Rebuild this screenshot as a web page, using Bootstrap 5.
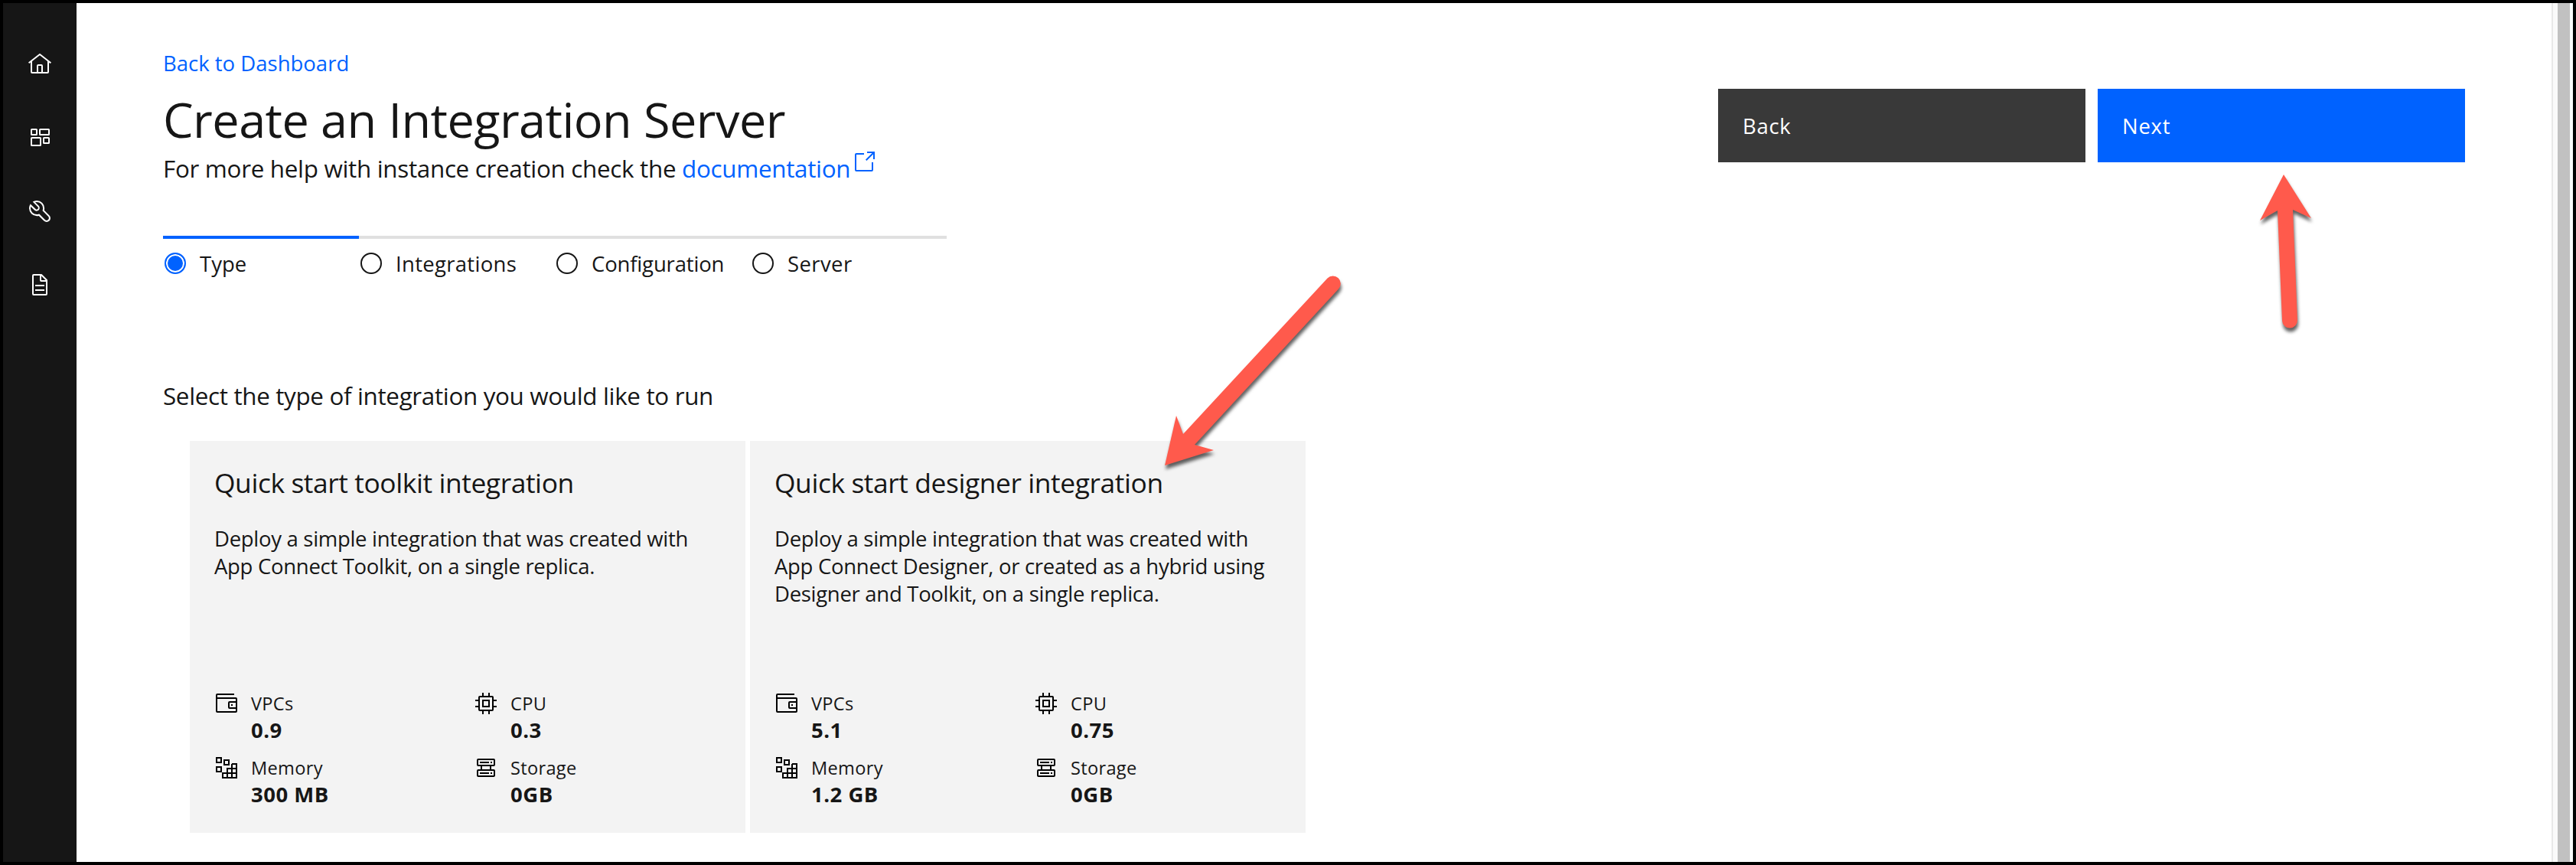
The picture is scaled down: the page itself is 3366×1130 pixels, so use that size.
<!DOCTYPE html>
<html lang="en">
<head>
<meta charset="utf-8">
<meta name="viewport" content="width=device-width, initial-scale=1">
<title>Create an Integration Server</title>
<link href="https://cdn.jsdelivr.net/npm/bootstrap@5.3.0/dist/css/bootstrap.min.css" rel="stylesheet">
<style>
  body { width: 3366px; height: 1130px; overflow: hidden; font-family: "Open Sans", "Noto Sans", sans-serif; color: #161616; background: #fff; font-size: 27.5px; line-height: 36px; }
  .frame { height: 1130px; border: 4px solid #000; }
  a { color: #0062ff; }
  .side { width: 96px; background: #161616; color: #fff; padding-top: 64px; gap: 64px; }
  svg { display: block; fill: currentColor; flex: none; }
  .side svg, .ico { width: 32px; height: 32px; }
  .page { padding: 61px 113px 0 113px; }
  .crumb { letter-spacing: 0; line-height: 36px; }
  .page-title { font-size: 63px; line-height: 80px; font-weight: 400; letter-spacing: -.56px; margin: 15px 0 4px; }
  .help { font-size: 31.4px; line-height: 40px; letter-spacing: -.31px; height: 40px; }
  .help .ico { margin: -4px 0 0 2px; }
  .steps { width: 1024px; margin-top: 68px; }
  .step { width: 256px; border-top: 4px solid #e0e0e0; padding: 14px 0 0 2px; gap: 18px; }
  .step.on { border-color: #0062ff; }
  .step span { padding-top: 1px; height: 36px; }
  .step i { width: 28px; height: 28px; border: 2px solid #161616; border-radius: 50%; flex: none; }
  .step.on i { border-color: #0062ff; background: #0062ff; box-shadow: inset 0 0 0 2px #fff; }
  .s2 { letter-spacing: .3px; } .s3 { letter-spacing: -.16px; } .s4 { letter-spacing: .4px; }
  .prompt { font-size: 31.4px; line-height: 40px; letter-spacing: -.34px; margin: 135px 0 39px; }
  .tiles { gap: 6px; margin-left: 35px; }
  .tile { width: 726px; height: 512px; background: #f3f3f3; padding: 30px 0 33px 32px; }
  .tile h2 { font-size: 35.4px; line-height: 48px; font-weight: 400; letter-spacing: -.42px; margin: 0 0 32px; }
  .tile p { letter-spacing: -.3px; white-space: nowrap; }
  .specs { row-gap: 16px; }
  .spec { width: 339px; gap: 16px; }
  .spec .ico { color: #000; }
  .lbl { font-size: 23.6px; line-height: 32px; letter-spacing: .3px; }
  .val { font-weight: 700; line-height: 36px; letter-spacing: .5px; padding-top: 1px; margin-bottom: -1px; }
  .actions { gap: 16px; padding-top: 51px; }
  .actions .btn { width: 480px; height: 96px; border: 0; border-radius: 0; font-size: 27.5px; line-height: 36px; letter-spacing: .7px; padding: 1px 0 0 32px; color: #fff; text-align: left; }
  .b-back { background: #393939; } .b-next { background: #0062ff; }
  .scroll { width: 28px; background: #fafafa; border-left: 2px solid #e8e8e8; padding: 0 4px 0 6px; }
  .scroll div { background: #c1c1c1; }
  .marks { left: 0; top: 0; pointer-events: none; }
  .marks g { fill: #ff5a4c; filter: drop-shadow(1px 5px 2px rgba(0,0,0,.62)); }
</style>
</head>
<body>
<svg width="0" height="0" class="position-absolute">
  <symbol id="wallet" viewBox="0 0 32 32"><path d="M22 17h2v2h-2z"/><path d="M28,8H4V5H26V3H4A2,2,0,0,0,2,5V26a2,2,0,0,0,2,2H28a2,2,0,0,0,2-2V10A2,2,0,0,0,28,8ZM4,26V10H28v3H20a2,2,0,0,0-2,2v6a2,2,0,0,0,2,2h8v3ZM28,15v6H20V15Z"/></symbol>
  <symbol id="chip" viewBox="0 0 32 32"><path d="M11,11V21H21V11Zm8,8H13V13h6Z"/><path d="M30,13V11H26V8a2,2,0,0,0-2-2H21V2H19V6H13V2H11V6H8A2,2,0,0,0,6,8v3H2v2H6v6H2v2H6v3a2,2,0,0,0,2,2h3v4h2V26h6v4h2V26h3a2,2,0,0,0,2-2V21h4V19H26V13ZM24,24H8V8H24Z"/></symbol>
  <symbol id="blocks" viewBox="0 0 32 32"><g fill="none" stroke="#000" stroke-width="2"><path d="M3 3h6v6H3zM13 6h6v6h-6zM3 15h6v6H3zM23 11h6v18H11v-6h18M17 29V17h12M23 11v18"/></g></symbol>
  <symbol id="disks" viewBox="0 0 32 32"><g fill="none" stroke="#000" stroke-width="2"><rect x="5" y="5" width="22" height="8" rx="1"/><rect x="5" y="19" width="22" height="8" rx="1"/><path d="M10 13v6M22 13v6M8 9h12M22 9h2M8 23h12M22 23h2"/></g></symbol>
</svg>

<div class="frame d-flex position-relative">
  <nav class="side d-flex flex-column align-items-center">
    <svg viewBox="0 0 32 32"><path d="M16.6123,2.2138a1.01,1.01,0,0,0-1.2427,0L1,13.4194l1.2427,1.5717L4,13.6209V26a2.0041,2.0041,0,0,0,2,2H26a2.0037,2.0037,0,0,0,2-2V13.63L29.7573,15,31,13.4282ZM18,26H14V18h4Zm2,0V18a2.0023,2.0023,0,0,0-2-2H14a2.002,2.002,0,0,0-2,2v8H6V12.0615l10-7.79,10,7.8005V26Z"/></svg>
    <svg viewBox="0 0 32 32"><g fill="none" stroke="#fff" stroke-width="2"><rect x="5" y="5" width="7" height="7" rx=".6"/><rect x="16" y="5" width="12" height="7" rx=".6"/><rect x="5" y="16" width="12" height="10" rx=".6"/><rect x="21" y="16" width="7" height="7" rx=".6"/></g></svg>
    <svg viewBox="0 0 32 32"><path d="M12.1,2A9.8,9.8,0,0,0,6.7,3.6L13.1,10a2.1,2.1,0,0,1,.2,3,2.1,2.1,0,0,1-3-.2L3.7,6.4A9.84,9.84,0,0,0,2,12.1,10.14,10.14,0,0,0,12.1,22.2a10.9,10.9,0,0,0,2.6-.3l6.7,6.7a5,5,0,0,0,7.1-7.1l-6.7-6.7a10.9,10.9,0,0,0,.3-2.6A10,10,0,0,0,12.1,2Zm8,10.1a7.61,7.61,0,0,1-.3,2.1l-.3,1.1.8.8,6.7,6.7a2.88,2.88,0,0,1,.9,2.1A2.72,2.72,0,0,1,27,27a2.9,2.9,0,0,1-4.2,0l-6.7-6.7-.8-.8-1.1.3a7.61,7.61,0,0,1-2.1.3,8.27,8.27,0,0,1-5.7-2.3A7.63,7.63,0,0,1,4,12.1a8.33,8.33,0,0,1,.3-2.2l4.4,4.4a4.14,4.14,0,0,0,5.9.2,4.14,4.14,0,0,0-.2-5.9L10,4.2a6.45,6.45,0,0,1,2-.3,8.27,8.27,0,0,1,5.7,2.3A8.49,8.49,0,0,1,20.1,12.1Z"/></svg>
    <svg viewBox="0 0 32 32"><path d="M25.7,9.3l-7-7A.91.91,0,0,0,18,2H8A2,2,0,0,0,6,4V28a2,2,0,0,0,2,2H24a2,2,0,0,0,2-2V10A.91.91,0,0,0,25.7,9.3ZM18,4.4,23.6,10H18ZM24,28H8V4h8v6a2,2,0,0,0,2,2h6Z"/><path d="M10 22h12v2H10zM10 16h12v2H10z"/></svg>
  </nav>

  <main class="page flex-grow-1">
    <div class="d-flex justify-content-between align-items-start">
      <header>
        <a class="crumb d-block text-decoration-none" href="#">Back to Dashboard</a>
        <h1 class="page-title">Create an Integration Server</h1>
        <div class="help d-flex align-items-start text-nowrap">For more help with instance creation check the&nbsp;<a class="text-decoration-none d-flex" href="#">documentation<svg class="ico" viewBox="0 0 32 32"><path d="M26,28H6a2,2,0,0,1-2-2V6A2,2,0,0,1,6,4H16V6H6V26H26V16h2V26A2,2,0,0,1,26,28Z"/><path d="M20 2v2h6.586L18 12.586 19.414 14 28 5.414V12h2V2z"/></svg></a></div>
      </header>
      <div class="actions d-flex">
        <button class="btn b-back" type="button">Back</button>
        <button class="btn b-next" type="button">Next</button>
      </div>
    </div>

    <div class="steps d-flex">
      <div class="step on d-flex align-items-center"><i></i><span>Type</span></div>
      <div class="step d-flex align-items-center"><i></i><span class="s2">Integrations</span></div>
      <div class="step d-flex align-items-center"><i></i><span class="s3">Configuration</span></div>
      <div class="step d-flex align-items-center"><i></i><span class="s4">Server</span></div>
    </div>

    <div class="prompt">Select the type of integration you would like to run</div>

    <div class="tiles d-flex">
      <section class="tile d-flex flex-column">
        <h2>Quick start toolkit integration</h2>
        <p class="m-0">Deploy a simple integration that was created with<br>App Connect Toolkit, on a single replica.</p>
        <div class="specs d-flex flex-wrap mt-auto">
          <div class="spec d-flex"><svg class="ico"><use href="#wallet"/></svg><div><div class="lbl">VPCs</div><div class="val">0.9</div></div></div>
          <div class="spec d-flex"><svg class="ico"><use href="#chip"/></svg><div><div class="lbl">CPU</div><div class="val">0.3</div></div></div>
          <div class="spec d-flex"><svg class="ico"><use href="#blocks"/></svg><div><div class="lbl">Memory</div><div class="val">300 MB</div></div></div>
          <div class="spec d-flex"><svg class="ico"><use href="#disks"/></svg><div><div class="lbl">Storage</div><div class="val">0GB</div></div></div>
        </div>
      </section>
      <section class="tile d-flex flex-column">
        <h2>Quick start designer integration</h2>
        <p class="m-0">Deploy a simple integration that was created with<br>App Connect Designer, or created as a hybrid using<br>Designer and Toolkit, on a single replica.</p>
        <div class="specs d-flex flex-wrap mt-auto">
          <div class="spec d-flex"><svg class="ico"><use href="#wallet"/></svg><div><div class="lbl">VPCs</div><div class="val">5.1</div></div></div>
          <div class="spec d-flex"><svg class="ico"><use href="#chip"/></svg><div><div class="lbl">CPU</div><div class="val">0.75</div></div></div>
          <div class="spec d-flex"><svg class="ico"><use href="#blocks"/></svg><div><div class="lbl">Memory</div><div class="val">1.2 GB</div></div></div>
          <div class="spec d-flex"><svg class="ico"><use href="#disks"/></svg><div><div class="lbl">Storage</div><div class="val">0GB</div></div></div>
        </div>
      </section>
    </div>
  </main>

  <div class="scroll d-flex"><div class="flex-grow-1"></div></div>
</div>

<svg class="marks position-absolute" width="3366" height="1130" viewBox="0 0 3366 1130">
  <g><path d="M1522 608L1537 543L1546 567L1734.500 363.500A10 10 0 0 1 1749 377.500L1561 581L1586 588Z"/></g>
  <g><path d="M2984 228L3020 285L2996 274L3002 418A10 10 0 0 1 2982 419L2976 275L2953 288Z"/></g>
</svg>
<script src="https://cdn.jsdelivr.net/npm/bootstrap@5.3.0/dist/js/bootstrap.bundle.min.js"></script>
</body>
</html>
